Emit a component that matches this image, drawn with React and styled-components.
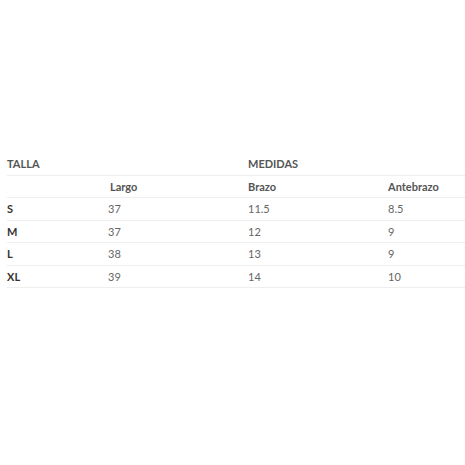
import React from 'react';
import styled, { createGlobalStyle } from 'styled-components';

const GlobalStyle = createGlobalStyle`
  html, body {
    margin: 0;
    background: #fff;
  }
  body {
    font-family: Lato, Inter, sans-serif;
  }
`;

const Page = styled.div`
  padding: 153px 0 0 7px;
`;

const Table = styled.table`
  width: 458px;
  border-collapse: collapse;
  font-size: 11px;
  color: #666;
`;

const Cell = styled.td`
  height: 21.5px;
  padding: 0 0 0 ${(p) => p.$indent || 0}px;
  border-bottom: 1px solid #eee;
  vertical-align: middle;
  text-align: left;
  font-weight: ${(p) => (p.$strong ? 700 : 400)};
  color: ${(p) => (p.$strong ? '#333' : '#666')};
`;

const HeadCell = styled(Cell).attrs({ as: 'th' })`
  font-weight: 700;
  color: #555;
`;

const sizes = [
  ['S', '37', '11.5', '8.5'],
  ['M', '37', '12', '9'],
  ['L', '38', '13', '9'],
  ['XL', '39', '14', '10'],
];

export default function App() {
  return (
    <Page>
      <GlobalStyle />
      <Table>
        <colgroup>
          <col style={{ width: 101 }} />
          <col style={{ width: 140 }} />
          <col style={{ width: 140 }} />
          <col />
        </colgroup>
        <thead>
          <tr>
            <HeadCell colSpan={2}>TALLA</HeadCell>
            <HeadCell colSpan={2}>MEDIDAS</HeadCell>
          </tr>
          <tr>
            <HeadCell />
            <HeadCell $indent={2}>Largo</HeadCell>
            <HeadCell>Brazo</HeadCell>
            <HeadCell>Antebrazo</HeadCell>
          </tr>
        </thead>
        <tbody>
          {sizes.map(([size, largo, brazo, ante]) => (
            <tr key={size}>
              <Cell $strong>{size}</Cell>
              <Cell>{largo}</Cell>
              <Cell>{brazo}</Cell>
              <Cell>{ante}</Cell>
            </tr>
          ))}
        </tbody>
      </Table>
    </Page>
  );
}
